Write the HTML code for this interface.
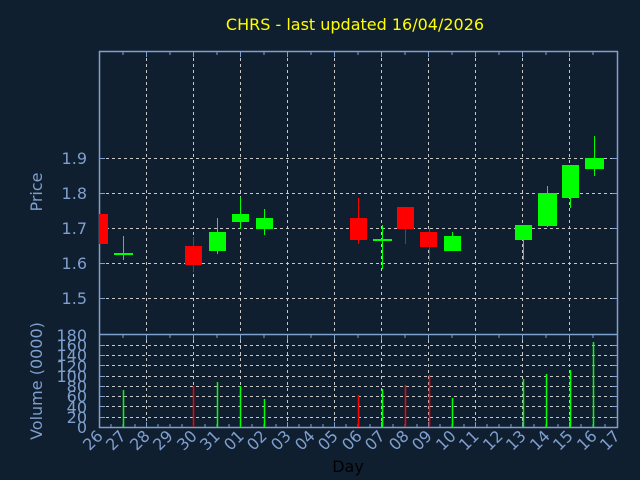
<!DOCTYPE html>
<html><head><meta charset="utf-8"><style>
html,body{margin:0;padding:0;background:#101f2f;}
svg{display:block;}
text{font-family:"DejaVu Sans","Liberation Sans",sans-serif;}
</style></head><body>
<svg width="640" height="480" viewBox="0 0 640 480" xmlns="http://www.w3.org/2000/svg">
<rect width="640" height="480" fill="#101f2f"/>
<text x="355" y="30" fill="#ffff00" font-size="16" text-anchor="middle">CHRS - last updated 16/04/2026</text>
<!-- grid -->
<g stroke="#c8c8c8" stroke-width="1" stroke-dasharray="3,3" fill="none">
<path d="M146.5 52V427M193.5 52V427M240.5 52V427M287.5 52V427M334.5 52V427M381.5 52V427M428.5 52V427M475.5 52V427M522.5 52V427M569.5 52V427"/>
<path d="M100 158.5H617M100 193.5H617M100 228.5H617M100 263.5H617M100 298.5H617"/>
<path d="M100 345.5H617M100 355.5H617M100 365.5H617M100 376.5H617M100 386.5H617M100 396.5H617M100 406.5H617M100 417.5H617"/>
</g>
<!-- axes -->
<g stroke="#7f9fcf" stroke-width="1.5" fill="none">
<path d="M99.5 51.5H617.5V427.5H99.5Z"/>
<path d="M99.5 334.5H617.5"/>
</g>
<g stroke="#7f9fcf" stroke-width="1" fill="none">
<path d="M123 52v3M146.5 52v5M170 52v3M193.5 52v5M217 52v3M240.5 52v5M264 52v3M287.5 52v5M311 52v3M334.5 52v5M358 52v3M381.5 52v5M405 52v3M428.5 52v5M452 52v3M475.5 52v5M499 52v3M522.5 52v5M546 52v3M569.5 52v5M593 52v3"/>
<path d="M123 335v3M146.5 335v5M170 335v3M193.5 335v5M217 335v3M240.5 335v5M264 335v3M287.5 335v5M311 335v3M334.5 335v5M358 335v3M381.5 335v5M405 335v3M428.5 335v5M452 335v3M475.5 335v5M499 335v3M522.5 335v5M546 335v3M569.5 335v5M593 335v3"/>
<path d="M111 427v-3M123 427v-3M135 427v-3M146.5 427v-5M158 427v-3M170 427v-3M182 427v-3M193.5 427v-5M205 427v-3M217 427v-3M229 427v-3M240.5 427v-5M252 427v-3M264 427v-3M276 427v-3M287.5 427v-5M299 427v-3M311 427v-3M323 427v-3M334.5 427v-5M346 427v-3M358 427v-3M370 427v-3M381.5 427v-5M393 427v-3M405 427v-3M417 427v-3M428.5 427v-5M440 427v-3M452 427v-3M464 427v-3M475.5 427v-5M487 427v-3M499 427v-3M511 427v-3M522.5 427v-5M534 427v-3M546 427v-3M558 427v-3M569.5 427v-5M581 427v-3M593 427v-3M605 427v-3"/>
<path d="M100 158.5h5M100 193.5h5M100 228.5h5M100 263.5h5M100 298.5h5M617 158.5h-5M617 193.5h-5M617 228.5h-5M617 263.5h-5M617 298.5h-5"/>
<path d="M100 345.5h5M100 355.5h5M100 365.5h5M100 376.5h5M100 386.5h5M100 396.5h5M100 406.5h5M100 417.5h5M617 345.5h-5M617 355.5h-5M617 365.5h-5M617 376.5h-5M617 386.5h-5M617 396.5h-5M617 406.5h-5M617 417.5h-5"/>
</g>
<!-- candles -->
<g fill="#ff0000" stroke="none">
<rect x="99" y="214" width="9" height="30"/>
<rect x="185" y="246" width="17" height="19"/><rect x="193" y="237" width="1" height="35"/>
<rect x="350" y="218" width="17" height="22"/><rect x="358" y="198" width="1" height="46"/>
<rect x="397" y="207" width="17" height="22"/><rect x="405" y="229" width="1" height="15"/>
<rect x="420" y="232" width="17" height="15"/><rect x="429" y="228" width="1" height="33"/>
</g>
<g fill="#00ff00" stroke="none">
<rect x="114" y="253" width="19" height="2"/><rect x="123" y="236" width="1" height="24"/>
<rect x="209" y="232" width="17" height="19"/><rect x="217" y="218" width="1" height="36"/>
<rect x="232" y="214" width="17" height="8"/><rect x="240" y="197" width="1" height="32"/>
<rect x="256" y="218" width="17" height="11"/><rect x="264" y="209" width="1" height="26"/>
<rect x="373" y="239" width="19" height="2"/><rect x="382" y="225" width="1" height="44"/>
<rect x="444" y="236" width="17" height="15"/><rect x="452" y="232" width="1" height="5"/>
<rect x="515" y="225" width="17" height="15"/><rect x="523" y="240" width="1" height="20"/>
<rect x="538" y="193" width="19" height="33"/><rect x="547" y="186" width="1" height="41"/>
<rect x="562" y="165" width="17" height="33"/><rect x="570" y="198" width="1" height="10"/>
<rect x="585" y="158" width="19" height="11"/><rect x="594" y="136" width="1" height="40"/>
</g>
<!-- volume -->
<g stroke-width="1.5">
<path stroke="#00ff00" d="M123.5 427V390M217.5 427V382M240.5 427V386M264.5 427V399M382.5 427V389M452.5 427V398M523.5 427V379M546.5 427V374M570.5 427V370M593.5 427V342"/>
<path stroke="#ff0000" d="M193.5 427V386M358.5 427V395M405.5 427V385M429.5 427V375"/>
</g>
<!-- labels -->
<g fill="#7f9fcf" font-size="16" text-anchor="end">
<text x="87" y="164">1.9</text><text x="87" y="199">1.8</text><text x="87" y="234">1.7</text><text x="87" y="269">1.6</text><text x="87" y="304">1.5</text>
<text x="87" y="341">180</text><text x="87" y="351">160</text><text x="87" y="361">140</text><text x="87" y="372">120</text><text x="87" y="382">100</text><text x="87" y="392">80</text><text x="87" y="402">60</text><text x="87" y="413">40</text><text x="87" y="423">20</text><text x="87" y="433">0</text>
</g>
<g fill="#7f9fcf" font-size="16" text-anchor="middle">
<text transform="translate(42,192) rotate(-90)">Price</text>
<text transform="translate(42,381) rotate(-90)">Volume (0000)</text>
</g>
<g fill="#7f9fcf" font-size="16" text-anchor="end">
<text transform="translate(104,437) rotate(-45)">26</text>
<text transform="translate(127,437) rotate(-45)">27</text>
<text transform="translate(151,437) rotate(-45)">28</text>
<text transform="translate(174,437) rotate(-45)">29</text>
<text transform="translate(198,437) rotate(-45)">30</text>
<text transform="translate(221,437) rotate(-45)">31</text>
<text transform="translate(245,437) rotate(-45)">01</text>
<text transform="translate(268,437) rotate(-45)">02</text>
<text transform="translate(292,437) rotate(-45)">03</text>
<text transform="translate(316,437) rotate(-45)">04</text>
<text transform="translate(339,437) rotate(-45)">05</text>
<text transform="translate(363,437) rotate(-45)">06</text>
<text transform="translate(386,437) rotate(-45)">07</text>
<text transform="translate(410,437) rotate(-45)">08</text>
<text transform="translate(433,437) rotate(-45)">09</text>
<text transform="translate(457,437) rotate(-45)">10</text>
<text transform="translate(480,437) rotate(-45)">11</text>
<text transform="translate(504,437) rotate(-45)">12</text>
<text transform="translate(527,437) rotate(-45)">13</text>
<text transform="translate(551,437) rotate(-45)">14</text>
<text transform="translate(574,437) rotate(-45)">15</text>
<text transform="translate(598,437) rotate(-45)">16</text>
<text transform="translate(621,437) rotate(-45)">17</text>
</g>
<text x="348" y="472" fill="#000000" font-size="16" text-anchor="middle">Day</text>
</svg>
</body></html>
